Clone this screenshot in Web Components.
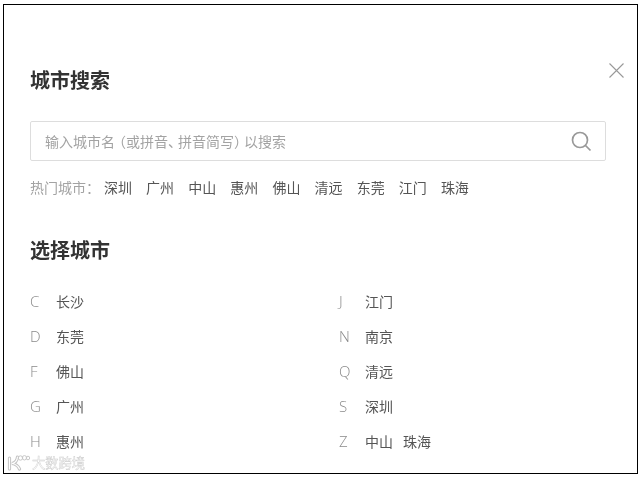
<!DOCTYPE html>
<html lang="zh"><head><meta charset="utf-8"><title>城市搜索</title>
<style>html,body{margin:0;background:#fff;font-family:"Noto Sans CJK SC","Liberation Sans",sans-serif;}</style>
</head><body>
<city-dialog>
  <section-title slot="top">城市搜索</section-title>
  <search-box slot="top">输入城市名<i style="padding-left:4px">（</i>或拼音<i style="padding-right:3px">、</i>拼音简写<i style="padding-right:3px">）</i>以搜索</search-box>
  <hot-cities slot="top" label="热门城市：" cities="深圳 广州 中山 惠州 佛山 清远 东莞 江门 珠海"></hot-cities>
  <section-title slot="second">选择城市</section-title>
  <city-row letter="C" cities="长沙"></city-row>
  <city-row letter="J" cities="江门"></city-row>
  <city-row letter="D" cities="东莞"></city-row>
  <city-row letter="N" cities="南京"></city-row>
  <city-row letter="F" cities="佛山"></city-row>
  <city-row letter="Q" cities="清远"></city-row>
  <city-row letter="G" cities="广州"></city-row>
  <city-row letter="S" cities="深圳"></city-row>
  <city-row letter="H" cities="惠州"></city-row>
  <city-row letter="Z" cities="中山 珠海"></city-row>
</city-dialog>
<script>
function def(name, html, init){
  customElements.define(name, class extends HTMLElement{
    connectedCallback(){
      if(this.shadowRoot) return;
      const r=this.attachShadow({mode:'open'});
      r.innerHTML=html;
      if(init) init(this,r);
    }
  });
}
def('city-dialog',`<style>
:host{display:block;box-sizing:border-box;width:635px;height:470px;margin:4px 0 0 3px;border:1px solid #000;position:relative;overflow:hidden;color:#333;will-change:transform}
.wrap{padding:60px 31px 0 26px}
.close{position:absolute;top:58px;left:605px;width:15px;height:15px}
.grid{display:grid;grid-template-columns:309px 1fr;margin-top:18px}
.mark{position:absolute;left:3px;top:450px;display:flex;align-items:center;gap:2px;color:#fff;-webkit-text-stroke:.45px #cdcdcd;font-size:13.250px;line-height:16px}
</style>
<div class="wrap"><slot name="top"></slot><div style="height:38px"></div><slot name="second"></slot><div class="grid"><slot></slot></div></div>
<svg class="close" viewBox="0 0 15 15" fill="none" stroke="#999" stroke-width="1.1"><path d="M.5.5l14 14M14.500.5l-14 14"/></svg>
<div class="mark"><svg width="23" height="16" viewBox="0 0 23 16" fill="none" stroke-linecap="round"><path d="M2.500 3v11M10.500 2C10 7 7.500 8 5 8.500c3.500.5 6 2 7.500 5.500" stroke="#c4c4c4" stroke-width="3.200"/><path d="M2.500 3v11M10.500 2C10 7 7.500 8 5 8.500c3.500.5 6 2 7.500 5.500" stroke="#fff" stroke-width="1.200"/><g stroke="#c8c8c8" stroke-width="1"><circle cx="13.500" cy="3" r="2.200"/><circle cx="17.500" cy="2.800" r="2.200"/><circle cx="21" cy="3" r="1.800"/></g></svg><span>大数跨境</span></div>`);
def('section-title',`<style>:host{display:block;font-size:20px;line-height:30px;font-weight:700;color:#333}</style><slot></slot>`);
def('search-box',`<style>
:host{display:flex;box-sizing:border-box;align-items:center;height:40px;width:576px;margin-top:26px;padding:0 13px 0 14px;border:1px solid #ddd;border-radius:2px}
span{flex:1;font-size:14px;color:#a3a3a3;line-height:20px}
::slotted(i){font-style:normal;font-feature-settings:"halt"}
svg{width:21px;height:21px;display:block;margin-top:1px}
</style><span><slot></slot></span><svg viewBox="0 0 21 21" fill="none" stroke="#999" stroke-width="1.700"><circle cx="9" cy="9" r="7.500"/><path d="M14.500 14.500l5 5"/></svg>`);
def('hot-cities',`<style>
:host{display:flex;margin-top:16px;font-size:14px;line-height:20px;color:#555}
.l{color:#a3a3a3;width:74px;white-space:nowrap}
.c{display:flex;gap:14.12px}
</style><span class="l"></span><div class="c"></div>`,(h,r)=>{
  r.querySelector('.l').textContent=h.getAttribute('label');
  const c=r.querySelector('.c');
  h.getAttribute('cities').split(' ').forEach(t=>{const s=document.createElement('span');s.textContent=t;c.append(s)});
});
def('city-row',`<style>
:host{display:flex;height:35px;align-items:center;font-size:14px;line-height:20px;color:#555}
.l{width:26px;color:#8a8a8a;font-family:"Open Sans","Liberation Sans",sans-serif;font-weight:300;font-size:15px}
.c{display:flex;gap:10px}
</style><span class="l"></span><div class="c"></div>`,(h,r)=>{
  r.querySelector('.l').textContent=h.getAttribute('letter');
  const c=r.querySelector('.c');
  h.getAttribute('cities').split(' ').forEach(t=>{const s=document.createElement('span');s.textContent=t;c.append(s)});
});
</script>
</body></html>
